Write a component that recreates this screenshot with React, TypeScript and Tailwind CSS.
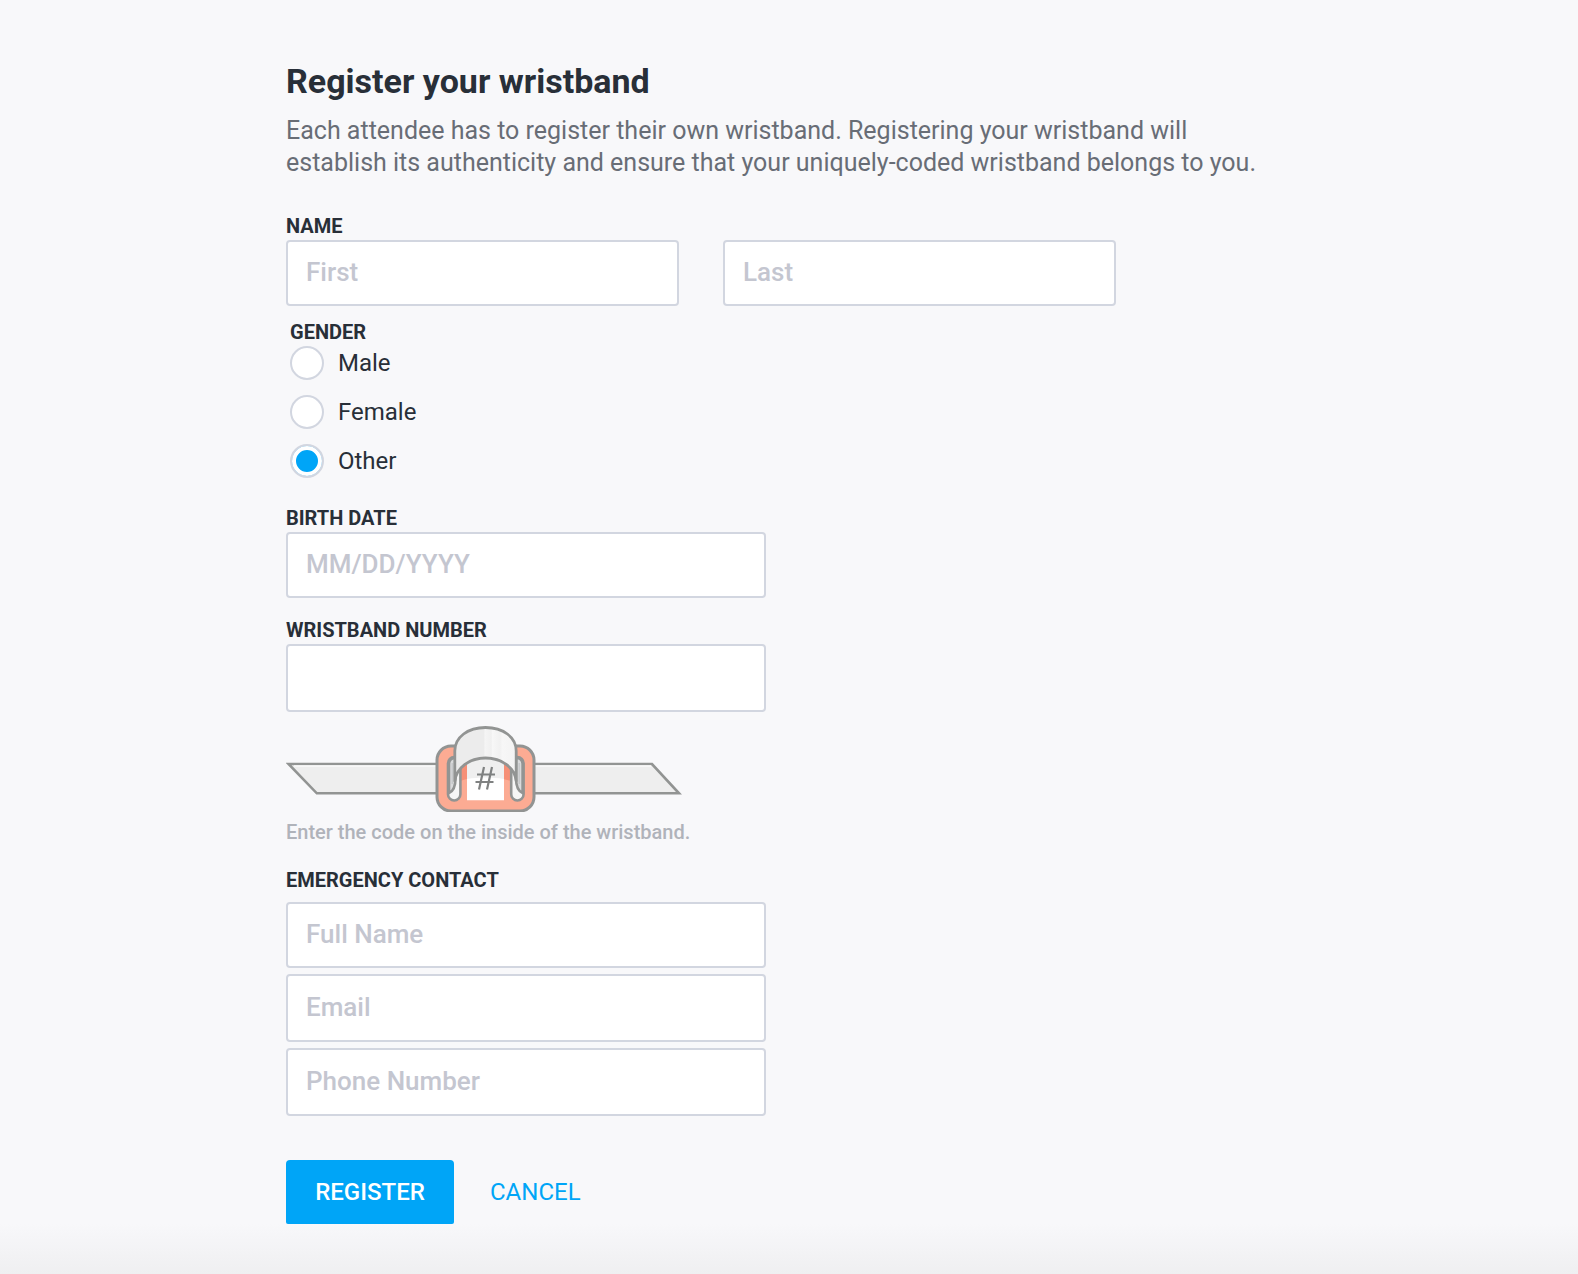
import { useState } from 'react';

import clsx from 'clsx';

const GENDERS = ['Male', 'Female', 'Other'];

const labelClass =
  'block text-[20px] leading-7 font-bold uppercase text-[#282f38]';

interface FieldProps {
  id: string;
  label?: string;
  placeholder?: string;
  type?: string;
  className?: string;
}

const Field = ({
  id,
  label,
  placeholder,
  type = 'text',
  className,
}: FieldProps) => (
  <input
    id={id}
    name={id}
    type={type}
    aria-label={label}
    placeholder={placeholder}
    className={clsx(
      'block w-full rounded-[4px] border-2 border-[#d2d6e0] bg-white px-[18px] pb-[3px] text-[26px] font-medium text-[#282f38] outline-none placeholder:text-[#c4c6d0] focus:border-[#00a5f7]',
      className,
    )}
  />
);

const WristbandDrawing = () => (
  <svg
    width="396"
    height="86"
    viewBox="0 0 396 86"
    fill="none"
    aria-hidden="true"
    className="block"
  >
    <defs>
      <linearGradient
        id="strap"
        x1="168"
        x2="230"
        y1="0"
        y2="0"
        gradientUnits="userSpaceOnUse"
      >
        <stop offset="0" stopColor="#ececec" />
        <stop offset="0.48" stopColor="#ececec" />
        <stop offset="0.5" stopColor="#f5f5f5" />
        <stop offset="0.6" stopColor="#f0f0f0" />
        <stop offset="0.62" stopColor="#f7f7f7" />
        <stop offset="0.74" stopColor="#f1f1f1" />
        <stop offset="0.78" stopColor="#f7f7f7" />
        <stop offset="1" stopColor="#f3f3f3" />
      </linearGradient>
      <clipPath id="inner">
        <rect x="174.5" y="30" width="50" height="44.5" />
      </clipPath>
    </defs>

    {/* band */}
    <g stroke="#929493" strokeWidth="2.6">
      <path d="M2.5 38H152V67.3H30.8Z" fill="#eeeeee" />
      <path d="M246 38H366L393 67.3H246Z" fill="#eeeeee" />
    </g>
    <path d="M8 40H151M247 40H365" stroke="#fafafa" strokeWidth="1.4" />

    {/* buckle */}
    <rect
      x="151"
      y="20"
      width="97"
      height="65"
      rx="14"
      fill="#fcab93"
      stroke="#929493"
      strokeWidth="3"
    />

    {/* inside of the strap, darker where the loop shades it */}
    <g clipPath="url(#inner)">
      <path d="M174 30H225V55C210 50 189 50 174 55Z" fill="#f68f76" />
      <rect x="181" y="30" width="37" height="44.5" fill="#ffffff" />
      <path d="M181 30H218V53C206 51 193 51 181 53Z" fill="#efefef" />
    </g>

    {/* slots */}
    <g stroke="#929493" strokeWidth="2.6">
      <rect x="162" y="31" width="12.4" height="43.5" rx="6.2" fill="#f6f6f6" />
      <rect
        x="225.2"
        y="31"
        width="12.4"
        height="43.5"
        rx="6.2"
        fill="#f6f6f6"
      />
      <path
        d="M163 67V38C163 34 166 32 169.5 32V52C169.5 59 168 65 163 67Z"
        fill="#dadbdc"
      />
      <path
        d="M236.6 67V38C236.6 34 233.6 32 230 32V52C230 59 231.6 65 236.6 67Z"
        fill="#dadbdc"
      />
    </g>
    <path d="M166.3 37V58M233.3 37V58" stroke="#c6c8ca" strokeWidth="1.6" />

    {/* loop */}
    <path
      d="M168.8 55V25C168.8 11 182 1.5 199.5 1.5S230.2 11 230.2 25V55C229 42 216 32 199.5 32S170.5 42 168.8 55Z"
      fill="url(#strap)"
      stroke="#929493"
      strokeWidth="2.8"
      strokeLinejoin="round"
    />
    <path
      d="M198 41L193 63.5M206 41L201 63.5M191 48.5H209M189.5 56H207.5"
      stroke="#7f8181"
      strokeWidth="2.2"
    />
  </svg>
);

export default function App() {
  const [gender, setGender] = useState('Other');

  return (
    <div className="flex min-h-screen flex-col bg-[#f8f8fa] font-['Roboto',sans-serif]">
      <main className="mx-auto w-full max-w-[1006px] grow pt-[61px]">
        <h1 className="text-[34px] leading-10 font-bold text-[#282f38]">
          Register your wristband
        </h1>
        <p className="mt-3.5 max-w-[980px] text-[25px] leading-8 text-[#686d76]">
          Each attendee has to register their own wristband. Registering your
          wristband will establish its authenticity and ensure that your
          uniquely-coded wristband belongs to you.
        </p>

        <form className="mt-[33px]" onSubmit={(e) => e.preventDefault()}>
          <label htmlFor="first-name" className={labelClass}>
            Name
          </label>
          <div className="grid max-w-[830px] grid-cols-2 gap-11">
            <Field
              id="first-name"
              placeholder="First"
              className="h-[66px]"
            />
            <Field
              id="last-name"
              label="Last name"
              placeholder="Last"
              className="h-[66px]"
            />
          </div>

          <fieldset className="mt-3 pl-1">
            <legend className={labelClass}>Gender</legend>
            <div className="flex flex-col items-start gap-[15px]">
              {GENDERS.map((item) => (
                <label
                  key={item}
                  className="flex items-center gap-3.5 text-[24px] leading-[34px] text-[#282f38]"
                >
                  <input
                    type="radio"
                    name="gender"
                    value={item}
                    checked={gender === item}
                    onChange={() => setGender(item)}
                    className="size-[34px] appearance-none rounded-full border-2 border-[#d2d6e0] bg-white bg-clip-padding checked:bg-[#00a5f7] checked:shadow-[inset_0_0_0_4px_white]"
                  />
                  {item}
                </label>
              ))}
            </div>
          </fieldset>

          <div className="mt-[26px] max-w-[480px]">
            <label htmlFor="birth-date" className={labelClass}>
              Birth date
            </label>
            <Field
              id="birth-date"
              placeholder="MM/DD/YYYY"
              className="h-[66px]"
            />
          </div>

          <div className="mt-[18px] max-w-[480px]">
            <label htmlFor="wristband-number" className={labelClass}>
              Wristband number
            </label>
            <Field id="wristband-number" className="h-[68px]" />
            <div className="mt-3.5">
              <WristbandDrawing />
            </div>
            <p className="mt-2 text-[20px] leading-6 font-medium text-[#b0b3ba]">
              Enter the code on the inside of the wristband.
            </p>
          </div>

          <div className="mt-[22px] max-w-[480px]">
            <label htmlFor="contact-name" className={labelClass}>
              Emergency contact
            </label>
            <div className="mt-2 flex flex-col gap-1.5">
              <Field
                id="contact-name"
                placeholder="Full Name"
                className="h-[66px]"
              />
              <Field
                id="contact-email"
                label="Email"
                type="email"
                placeholder="Email"
                className="h-[68px]"
              />
              <Field
                id="contact-phone"
                label="Phone number"
                type="tel"
                placeholder="Phone Number"
                className="h-[68px]"
              />
            </div>
          </div>

          <div className="mt-11 flex items-center gap-9">
            <button
              type="submit"
              className="h-16 w-[168px] rounded-t-[4px] rounded-b-[2px] bg-[#00a5f7] text-[24px] font-medium text-white uppercase"
            >
              Register
            </button>
            <a href="#" className="text-[24px] text-[#00a5f7] uppercase">
              Cancel
            </a>
          </div>
        </form>
      </main>

      <div className="h-[50px] bg-linear-to-b from-[#f8f8fa] to-[#efeff1]" />
    </div>
  );
}
